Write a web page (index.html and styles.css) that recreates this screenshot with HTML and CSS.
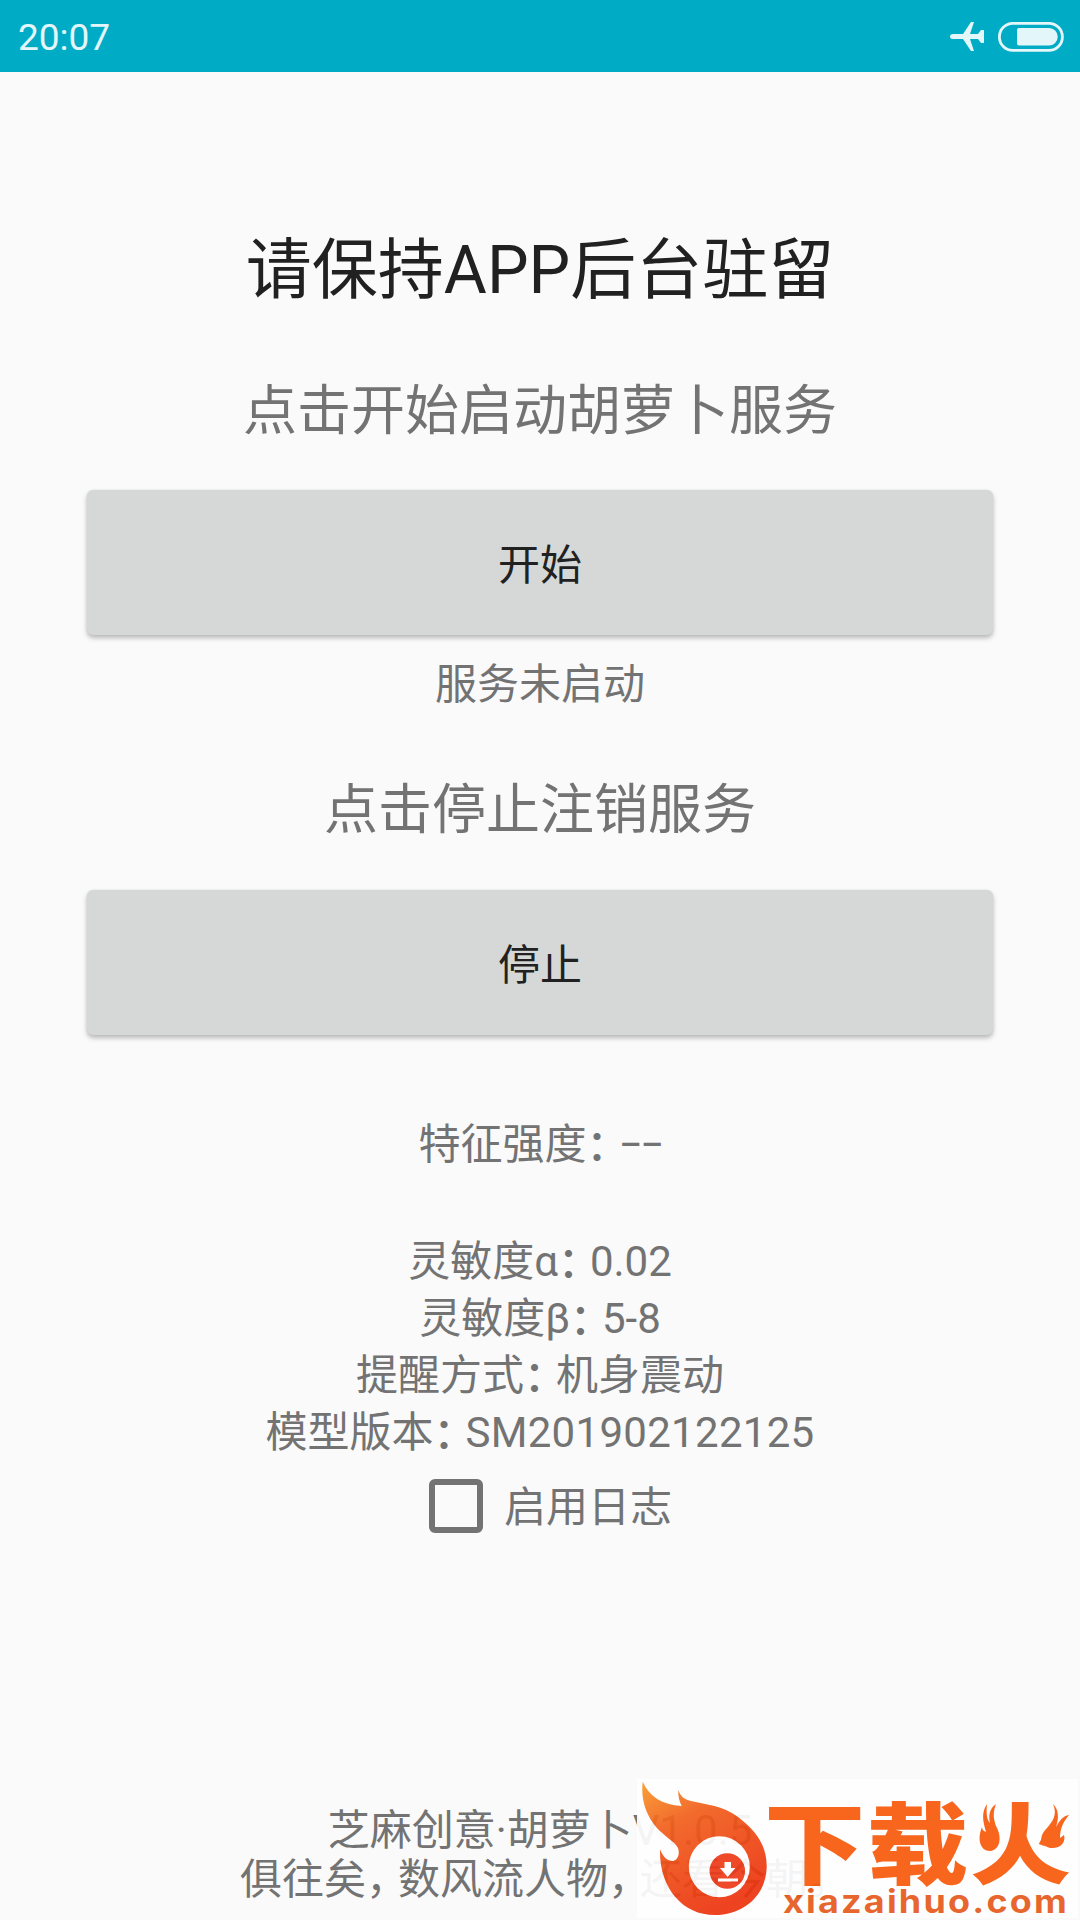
FILE: index.html
```html
<!DOCTYPE html>
<html lang="zh-CN">
<head>
    <meta charset="UTF-8">
    <meta name="viewport" content="width=device-width, initial-scale=1.0">
    <title>胡萝卜</title>
    <link rel="stylesheet" href="styles.css">
</head>
<body>
    <header class="status-bar">
        <span class="time">20:07</span>
        <div class="status-icons">
            <svg class="plane" width="34" height="30" viewBox="0 0 34 30">
                <path d="M3 12H13L21 0H24L20 12H28L31 8H34V21H31L28 17H20L24 29H21L13 17H3Q0 17 0 14.500Q0 12 3 12Z"/>
            </svg>
            <svg class="battery" width="66" height="30" viewBox="0 0 66 30">
                <rect class="battery-shell" x="1.400" y="1.400" width="63" height="27" rx="13.500"/>
                <path class="battery-level" d="M21 6H51A8.750 8.750 0 0 1 51 23.500H21Q19 23.500 19 21.500V8Q19 6 21 6Z"/>
            </svg>
        </div>
    </header>
    <main class="content">
        <h1>请保持APP后台驻留</h1>
        <h2 class="start-title">点击开始启动胡萝卜服务</h2>
        <button type="button" class="btn">开始</button>
        <p class="service-state">服务未启动</p>
        <h2 class="stop-title">点击停止注销服务</h2>
        <button type="button" class="btn">停止</button>
        <p class="strength">特征强度<span class="punct colon">：</span><span class="dashes">−−</span></p>
        <div class="params">
            <p>灵敏度α<span class="punct colon">：</span>0.02</p>
            <p>灵敏度β<span class="punct colon">：</span>5-8</p>
            <p>提醒方式<span class="punct colon">：</span>机身震动</p>
            <p>模型版本<span class="punct colon">：</span><span class="version">SM201902122125</span></p>
        </div>
        <label class="log-option">
            <input type="checkbox" class="log-check">
            <span class="log-text">启用日志</span>
        </label>
    </main>
    <footer class="footer">
        <p>芝麻创意·胡萝卜V1.0.5</p>
        <p>俱往矣<span class="punct">，</span>数风流人物<span class="punct">，</span>还看今朝<span class="punct">。</span></p>
    </footer>
    <div class="site-badge">
        <svg width="441" height="139" viewBox="0 0 441 139">
            <defs>
                <linearGradient id="flame" x1="0" y1="0" x2="0.500" y2="1">
                    <stop offset="0" stop-color="#f99a2a"/>
                    <stop offset="0.350" stop-color="#f25f1c"/>
                    <stop offset="1" stop-color="#ed340f"/>
                </linearGradient>
            </defs>
            <path fill="url(#flame)" d="M5.700 2.700C12 17 25 26 44.700 27C42 22 41 16 41.300 11C44 18 47 20 54 22C70 26 85 26 101 38C120 52 130 68 129.700 88C129 117 106 136 78 136C45 136 22 108 23 70.300C26 78 30 82 36 82C41 81 43 75 41 69C38 62 24 56 16 44C7 31 4 17 5.700 2.700Z"/>
            <circle cx="82.300" cy="87.700" r="30.500" fill="#fff"/>
            <circle cx="90.300" cy="92" r="17.800" fill="#ed3a18"/>
            <path fill="#fff" d="M87.500 83H94V89H98.500L90.700 98L83 89H87.500ZM81 99.500H101V102.500H81Z"/>
            <g class="badge-name">
                <text transform="translate(127 98) scale(1.100 0.960)">下</text>
                <text transform="translate(230 98) scale(1.100 0.960)">载</text>
                <text transform="translate(333 98) scale(1.100 0.960)">火</text>
            </g>
            <ellipse cx="352" cy="50" rx="15" ry="26" fill="#fff"/>
            <ellipse cx="419" cy="49" rx="16" ry="25" fill="#fff"/>
            <path class="spark" d="M350 25C344 34 346 42 349 53C346 52 345 50 345 48C340 60 343 72 353 72C364 71 365 57 359 47C356 39 356 33 359 25C353 29 351 36 353 44C350 41 349 36 350 25Z"/>
            <path class="spark" d="M416 25C421 36 415 43 410 49C402 57 402 66 413 69C424 70 429 63 427 56L423 59C423 50 426 43 432 36C426 37 423 41 419 48C422 39 422 31 416 25Z"/>
            <text class="badge-url" x="146" y="133.500" textLength="286" lengthAdjust="spacingAndGlyphs">xiazaihuo.com</text>
        </svg>
    </div>
</body>
</html>
```
FILE: styles.css
```css
* {
    box-sizing: border-box;
}
body {
    position: relative;
    display: flex;
    flex-direction: column;
    height: 1920px;
    margin: 0;
    overflow: hidden;
    background-color: #fafafa;
    color: #737373;
    font-family: Roboto, "Noto Sans CJK SC", sans-serif;
    font-size: 42px;
    line-height: 57px;
}
h1, h2, p {
    margin: 0;
    font-weight: normal;
    white-space: nowrap;
}
.status-bar {
    display: flex;
    justify-content: space-between;
    align-items: center;
    height: 72px;
    padding: 2px 16px 0 18px;
    background-color: #00acc5;
    color: #e3f6f9;
}
.time {
    font-size: 37px;
}
.status-icons {
    display: flex;
    align-items: center;
    gap: 14px;
}
.plane, .battery-level {
    fill: #e3f6f9;
}
.battery-shell {
    fill: none;
    stroke: #e3f6f9;
    stroke-width: 2.8px;
}
.content {
    display: flex;
    flex: 1;
    flex-direction: column;
    align-items: center;
    padding: 154px 87px 0;
}
h1 {
    color: #212121;
    font-size: 66px;
    line-height: 90px;
}
h2 {
    font-size: 54px;
    line-height: 74px;
}
.start-title {
    margin-top: 59px;
}
.stop-title {
    margin-top: 61px;
}
.btn {
    width: 906px;
    height: 145px;
    margin-top: 42px;
    padding: 5px 0 0;
    border: none;
    border-radius: 6px;
    background-color: #d6d8d7;
    box-shadow: 0 3px 5px rgba(0, 0, 0, 0.26), 0 0 2px rgba(0, 0, 0, 0.08);
    color: #212121;
    font: inherit;
}
.start-title + .btn {
    margin-top: 41px;
}
.service-state {
    margin-top: 21px;
}
.strength {
    margin-top: 81px;
}
.dashes {
    letter-spacing: -2.5px;
}
.params {
    margin-top: 60px;
    text-align: center;
}
.punct {
    display: inline-block;
    width: 32px;
}
.colon {
    position: relative;
    top: 1px;
    font-weight: 500;
}
.version {
    letter-spacing: 0.3px;
}
.log-option {
    display: flex;
    align-items: center;
    gap: 21px;
    margin-top: 16px;
    padding-left: 21px;
}
.log-check {
    appearance: none;
    width: 54px;
    height: 54px;
    margin: 0;
    border: 6px solid #737373;
    border-radius: 6px;
}
.log-text {
    padding-top: 4px;
    line-height: 53px;
}
.footer {
    padding-bottom: 16px;
    line-height: 49px;
    text-align: center;
}
.site-badge {
    position: absolute;
    top: 1779px;
    left: 637px;
    width: 441px;
    height: 139px;
    background-color: #fff;
    opacity: 0.92;
}
.badge-name {
    fill: #f85a0c;
    font-family: "Noto Sans CJK SC", sans-serif;
    font-size: 92px;
    font-weight: 900;
}
.spark {
    fill: #f85a0c;
}
.badge-url {
    fill: #e65a1c;
    font-family: Inter, sans-serif;
    font-size: 32px;
    font-weight: bold;
    letter-spacing: 2px;
}
```
